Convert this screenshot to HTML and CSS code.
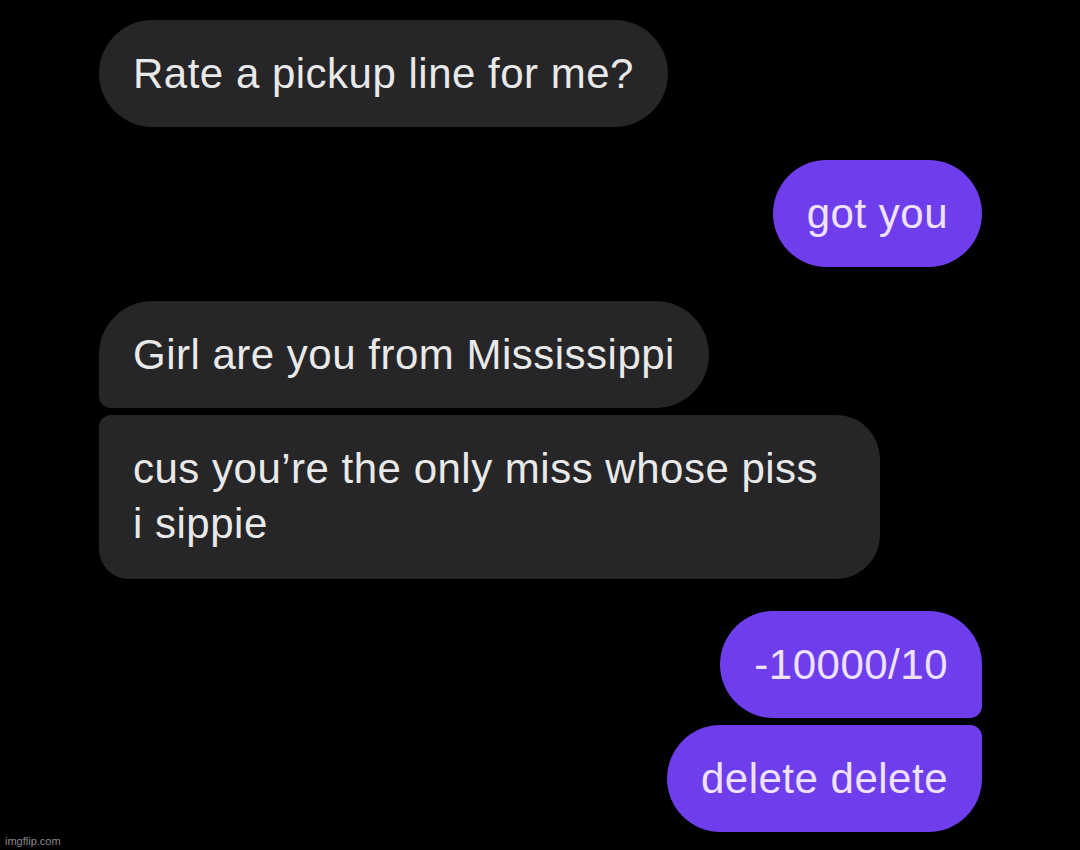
FILE: index.html
```html
<!DOCTYPE html>
<html lang="en">
<head>
<meta charset="utf-8">
<title>Chat</title>
<link rel="stylesheet" href="styles.css">
</head>
<body>
<main class="chat">
  <div class="row in"><div class="bubble gray">Rate a pickup line for me?</div></div>
  <div class="row out gap-big"><div class="bubble purple">got you</div></div>
  <div class="row in gap-big2"><div class="bubble gray first">Girl are you from Mississippi</div></div>
  <div class="row in gap-small"><div class="bubble gray last wide">cus you’re the only miss whose piss i sippie</div></div>
  <div class="row out gap-big3"><div class="bubble purple first">-10000/10</div></div>
  <div class="row out gap-small"><div class="bubble purple last">delete delete</div></div>
</main>
<div class="watermark">imgflip.com</div>
</body>
</html>
```
FILE: styles.css
```css
html, body {
  margin: 0;
  padding: 0;
  background: #000;
  width: 1080px;
  height: 850px;
  overflow: hidden;
}
body {
  position: relative;
  font-family: "Liberation Sans", Arial, sans-serif;
}
.chat {
  display: flex;
  flex-direction: column;
  padding: 20px 98px 0 99px;
}
.row {
  display: flex;
}
.row.in { justify-content: flex-start; }
.row.out { justify-content: flex-end; }
.gap-big { margin-top: 33px; }
.gap-big2 { margin-top: 34px; }
.gap-big3 { margin-top: 32px; }
.gap-small { margin-top: 7px; }
.bubble {
  font-size: 42px;
  letter-spacing: 0.5px;
  line-height: 55px;
  padding: 26px 34px 26px 34px;
  border-radius: 54px;
  max-width: 782px;
  box-sizing: border-box;
}
.gray {
  background: #262527;
  color: #e9e9e9;
}
.purple {
  background: #6f3eec;
  color: #eee2ff;
}
.in .first { border-bottom-left-radius: 12px; }
.in .last { border-radius: 12px 44px 44px 30px; }
.out .first { border-bottom-right-radius: 12px; }
.out .last { border-top-right-radius: 12px; }
.wide {
  width: 781px;
  padding: 26px 47px 28px 34px;
}
.watermark {
  position: absolute;
  left: 5px;
  bottom: 3px;
  font-size: 11px;
  color: #8a8a8a;
  font-family: "Liberation Sans", Arial, sans-serif;
}
```
